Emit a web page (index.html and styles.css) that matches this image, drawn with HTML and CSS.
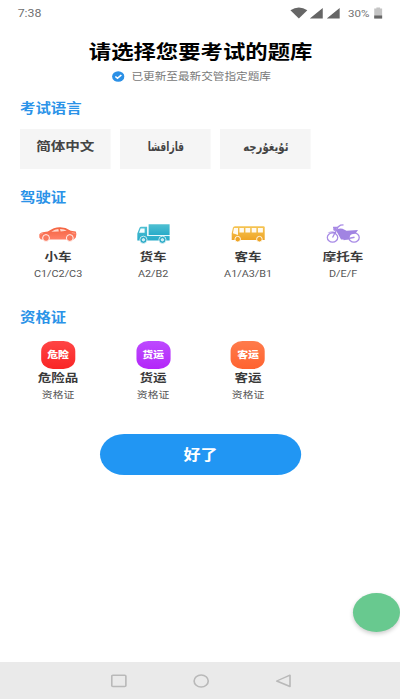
FILE: index.html
```html
<!DOCTYPE html>
<html lang="zh-CN">
<head>
    <meta charset="UTF-8">
    <meta name="viewport" content="width=device-width, initial-scale=1.0">
    <title>选择题库</title>
    <link rel="stylesheet" href="styles.css">
</head>
<body>
    <div class="screen">
        <div class="status-bar">
            <span class="time">7:38</span>
            <svg class="signals" viewBox="0 0 52 12" preserveAspectRatio="none">
                <path d="M1 3.2Q9.500-2.400 18 3.200L9.500 11.500Z" fill="#666"/>
                <path d="M33.500 1V11.500H20.500Z M50.500 1V11.500H37.500Z" fill="#666"/>
            </svg>
            <span class="percent">30%</span>
            <svg class="battery" viewBox="0 0 8 12" preserveAspectRatio="none">
                <path d="M2.200 0.500H5.800V1.500H8V11.500H0V1.500H2.200Z" fill="#c4c4c4"/>
                <path d="M0 8.500H8V11.500H0Z" fill="#666"/>
            </svg>
        </div>

        <h1>请选择您要考试的题库</h1>
        <div class="update-tip">
            <svg class="check" viewBox="0 0 12 12" preserveAspectRatio="none">
                <circle cx="6" cy="6" r="5.700" fill="#2b90e6"/>
                <path d="M3.300 6.100L5.300 8L8.900 4.300" fill="none" stroke="#fff" stroke-width="1.500"/>
            </svg>
            <span>已更新至最新交管指定题库</span>
        </div>

        <h2>考试语言</h2>
        <div class="languages">
            <div class="language">简体中文</div>
            <div class="language"><span class="kazakh" lang="kk" dir="rtl">قازاقشا</span></div>
            <div class="language"><span class="uyghur" lang="ug" dir="rtl">ئۇيغۇرچە</span></div>
        </div>

        <h2 class="license-title">驾驶证</h2>
        <div class="grid licenses">
            <div class="item">
                <svg class="vehicle" viewBox="0 0 38 20" preserveAspectRatio="none">
                    <defs>
                        <linearGradient id="car" x1="0" y1="0" x2="0" y2="1"><stop offset="0" stop-color="#f4633f"/><stop offset="1" stop-color="#ff8068"/></linearGradient>
                    </defs>
                    <path d="M0.500 10.500Q1 8.300 9 7.600Q15 3.300 21 3.300Q26.500 3.200 32 6.700L37 7.400Q38.300 10 37 13.500L35 15.500H2L0.500 13.500Z" fill="url(#car)"/>
                    <path d="M12.500 7.700Q16 5.200 19.500 5L20 7.600Z M21.200 5Q25.500 4.900 28 6.800L21.800 7.500Z" fill="#ffd8ce"/>
                    <path d="M1.500 10.200L4 9.300M33 8.600L36.500 9.400" stroke="#ffb7a6" stroke-width="0.700"/>
                    <g fill="#f9795e" stroke="#fff" stroke-width="0.900">
                        <circle cx="7.200" cy="14" r="3.400"/>
                        <circle cx="31" cy="14" r="3.400"/>
                    </g>
                </svg>
                <div class="name">小车</div>
                <div class="code">C1/C2/C3</div>
            </div>
            <div class="item">
                <svg class="vehicle" viewBox="0 0 38 20" preserveAspectRatio="none">
                    <defs>
                        <linearGradient id="truck" x1="0" y1="0" x2="0" y2="1"><stop offset="0" stop-color="#4fc0d2"/><stop offset="1" stop-color="#27abc9"/></linearGradient>
                    </defs>
                    <path d="M14.500 0.300H35.500V11H14.500Z" fill="url(#truck)"/>
                    <path d="M7 2.800H13V12H35.500V16.500H3.200V9.500L5.200 4.200Q5.700 2.800 7 2.800Z" fill="url(#truck)"/>
                    <path d="M6.500 4.500H10.500V8.800H4.900Z" fill="#f3fdff"/>
                    <path d="M13.500 11.500H35.500" stroke="#d8f5fa" stroke-width="0.700"/>
                    <g fill="#bdebf3" stroke="#fff" stroke-width="0.700">
                        <circle cx="9.300" cy="15.800" r="3.600" fill="#2dacc8"/>
                        <circle cx="28.300" cy="15.800" r="3.600" fill="#2dacc8"/>
                        <circle cx="9.300" cy="15.800" r="1.200"/>
                        <circle cx="28.300" cy="15.800" r="1.200"/>
                    </g>
                </svg>
                <div class="name">货车</div>
                <div class="code">A2/B2</div>
            </div>
            <div class="item">
                <svg class="vehicle" viewBox="0 0 38 20" preserveAspectRatio="none">
                    <defs>
                        <linearGradient id="bus" x1="0" y1="0" x2="0" y2="1"><stop offset="0" stop-color="#f5c453"/><stop offset="1" stop-color="#efa525"/></linearGradient>
                    </defs>
                    <path d="M5.500 2.300H34Q35.300 2.300 35.300 3.500V16H2.300V9.500L3.500 3.800Q3.900 2.300 5.500 2.300Z" fill="url(#bus)"/>
                    <path d="M4.600 4H8.600V11L3.500 9.200Z M10 4H14.500V8.500H10Z M16 4H20.800V8.500H16Z M22.300 4H27V8.500H22.300Z M28.500 4H33.500V8.500H28.500Z" fill="#fffaf0"/>
                    <g fill="#efa525" stroke="#fff" stroke-width="0.900">
                        <circle cx="8.300" cy="15.200" r="2.800"/>
                        <circle cx="30" cy="15.200" r="2.800"/>
                    </g>
                </svg>
                <div class="name">客车</div>
                <div class="code">A1/A3/B1</div>
            </div>
            <div class="item">
                <svg class="vehicle" viewBox="0 0 38 20" preserveAspectRatio="none">
                    <g fill="none" stroke="#a88be6" stroke-width="1.300">
                        <ellipse cx="9" cy="13.500" rx="5.200" ry="4.700"/>
                        <ellipse cx="30.500" cy="13.500" rx="5.200" ry="4.700"/>
                        <path d="M9 13.500L14.500 3.200M9.500 3.300H14L17 1.200L20 0.800"/>
                        <path d="M20 15.500L31 13.200" stroke-width="1.600"/>
                    </g>
                    <path d="M4 9Q8 6.300 13 8.500L12 9.800Q8 7.800 4 9Z M12.500 6.500Q14 4 19 4.800L23 6.700L34.500 6L32 9.500L27 10.500L25 15.500H17.500L14.500 10Z" fill="#a184e2"/>
                    <circle cx="11.500" cy="5" r="1.900" fill="#a98ae5"/>
                </svg>
                <div class="name">摩托车</div>
                <div class="code">D/E/F</div>
            </div>
        </div>

        <h2 class="cert-title">资格证</h2>
        <div class="grid certs">
            <div class="item">
                <div class="badge red">危险</div>
                <div class="name">危险品</div>
                <div class="code">资格证</div>
            </div>
            <div class="item">
                <div class="badge purple">货运</div>
                <div class="name">货运</div>
                <div class="code">资格证</div>
            </div>
            <div class="item">
                <div class="badge orange">客运</div>
                <div class="name">客运</div>
                <div class="code">资格证</div>
            </div>
        </div>

        <button class="done-btn">好了</button>

        <div class="float-ball"></div>

        <div class="nav-bar">
            <svg viewBox="0 0 14 14"><rect x="1" y="1.200" width="12" height="11.300" rx="1"/></svg>
            <svg viewBox="0 0 14 14"><circle cx="7" cy="7" r="6"/></svg>
            <svg viewBox="0 0 14 14"><path d="M12.500 1.200V12.500L1.200 7Z"/></svg>
        </div>
    </div>
</body>
</html>
```
FILE: styles.css
```css
* {
    box-sizing: border-box;
}

body {
    margin: 0;
    background-color: #fff;
    font-family: Roboto, "Noto Sans CJK SC", sans-serif;
    overflow: hidden;
}

/* 340px design stretched to the full 400px width */
.screen {
    position: relative;
    display: flex;
    flex-direction: column;
    width: 340px;
    height: 700px;
    padding-bottom: 1px;
    transform: scaleX(1.17647);
    transform-origin: 0 0;
}

.status-bar {
    display: flex;
    align-items: center;
    height: 26px;
    padding: 0 15px;
    font-size: 10px;
    color: #707070;
}

.time {
    flex: 1;
    font-size: 10.5px;
}

.signals {
    width: 44px;
    height: 12px;
}

.percent {
    margin: 0 4px 0 6px;
    font-size: 9.8px;
}

.battery {
    width: 7px;
    height: 12px;
}

h1 {
    margin: 14px 0 0;
    height: 25px;
    line-height: 25px;
    text-align: center;
    text-indent: 1px;
    font-size: 19px;
    font-weight: 700;
    color: #000;
}

.update-tip {
    display: flex;
    justify-content: center;
    align-items: center;
    gap: 6px;
    height: 22px;
    padding-right: 15px;
    font-size: 9.9px;
    color: #777;
}

.check {
    width: 11px;
    height: 11px;
}

h2 {
    margin: 12px 17px 0;
    height: 20px;
    line-height: 20px;
    font-size: 13.1px;
    font-weight: 700;
    color: #2b93e8;
}

.languages {
    display: flex;
    gap: 8px;
    margin: 10px 17px 0;
}

.language {
    width: 77px;
    height: 40px;
    line-height: 35px;
    text-align: center;
    background-color: #f5f5f5;
    font-size: 12.4px;
    font-weight: 700;
    color: #444;
}

.kazakh,
.uyghur {
    display: inline-block;
    font-family: "DejaVu Sans", sans-serif;
    font-size: 12.5px;
    line-height: 32px;
}

.kazakh {
    transform: scaleX(0.62);
}

.uyghur {
    transform: scaleX(0.69);
}

.license-title {
    margin-top: 19px;
}

.grid {
    display: grid;
    grid-template-columns: repeat(4, 80.75px);
    margin-left: 9px;
}

.licenses {
    margin-top: 16px;
}

.item {
    display: flex;
    flex-direction: column;
    align-items: center;
}

.vehicle {
    width: 32.3px;
    height: 20px;
    margin-bottom: 4px;
}

.name {
    height: 18px;
    line-height: 18px;
    font-size: 11.5px;
    font-weight: 700;
    color: #3a3a3a;
}

.code {
    height: 14px;
    line-height: 15px;
    font-size: 9.2px;
    color: #555;
}

.cert-title {
    margin-top: 28px;
}

.certs {
    margin-top: 13px;
}

.badge {
    width: 29px;
    height: 28px;
    line-height: 28px;
    border-radius: 10px;
    text-align: center;
    font-size: 9.3px;
    font-weight: 900;
    color: #fff;
}

.red {
    background: linear-gradient(#ff4545, #f92525);
}

.purple {
    background: linear-gradient(#bd4aff, #b326f8);
}

.orange {
    background: linear-gradient(#ff7b4b, #ff6330);
}

.certs .name {
    height: 18px;
}

.done-btn {
    width: 171px;
    height: 41px;
    margin: 33px 0 0 85px;
    padding: 0 0 2px;
    border: none;
    border-radius: 21px;
    background-color: #2196f3;
    font-family: inherit;
    font-size: 14.5px;
    font-weight: 700;
    color: #fff;
}

.float-ball {
    position: absolute;
    top: 593px;
    right: 0;
    width: 40px;
    height: 39px;
    border-radius: 50%;
    background-color: #68c98f;
    box-shadow: 0 2px 4px rgba(0,0,0,0.2);
}

.nav-bar {
    display: flex;
    justify-content: center;
    align-items: center;
    gap: 56px;
    height: 37px;
    margin-top: auto;
    padding-left: 1px;
    background-color: #eaeaea;
}

.nav-bar svg {
    width: 14px;
    height: 14px;
    fill: none;
    stroke: #b9b9b9;
    stroke-width: 1.4;
    stroke-linejoin: round;
}
```
